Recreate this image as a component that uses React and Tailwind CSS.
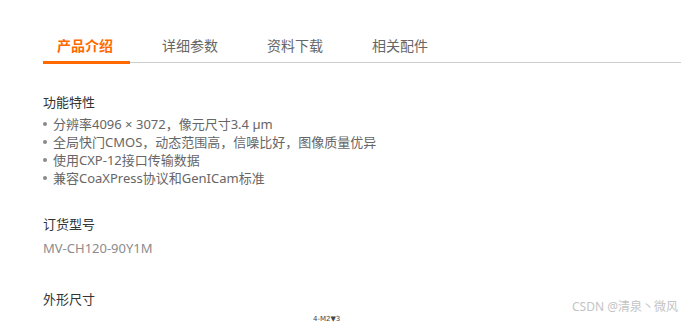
import React from 'react';

const tabs = ['产品介绍', '详细参数', '资料下载', '相关配件'];

const features = [
  '分辨率4096 × 3072，像元尺寸3.4 µm',
  '全局快门CMOS，动态范围高，信噪比好，图像质量优异',
  '使用CXP-12接口传输数据',
  '兼容CoaXPress协议和GenICam标准',
];

const App = () => {
  return (
    <div
      className="relative w-[681px] h-[324px] overflow-hidden bg-white"
      style={{ fontFamily: '"Noto Sans", "Noto Sans CJK SC", sans-serif' }}
    >
      {/* tabs */}
      <div className="ml-[43px] mt-[30px] flex items-start gap-[18px] border-b border-[#cccccc] h-[33px]">
        {tabs.map((t, i) => (
          <div
            key={t}
            className={
              i === 0
                ? 'w-[87px] h-[34px] pl-[14px] pt-[6px] text-[14px] leading-[20px] font-bold text-[#ff6a00] border-b-[3px] border-[#ff6a00]'
                : 'w-[87px] h-[32px] pl-[14px] pt-[6px] text-[14px] leading-[20px] text-[#666666]'
            }
          >
            {t}
          </div>
        ))}
      </div>

      <div className="pl-[43px]">
        <div className="mt-[29px] text-[13px] leading-[20px] text-[#333333]">功能特性</div>
        <ul className="mt-[3px]">
          {features.map((f) => (
            <li key={f} className="flex items-center gap-[6px] text-[13px] leading-[18px] text-[#666666]">
              <span className="w-[4px] h-[4px] rounded-full bg-[#8a8a8a] shrink-0" />
              {f}
            </li>
          ))}
        </ul>

        <div className="mt-[27px] text-[13px] leading-[20px] text-[#333333]">订货型号</div>
        <div className="mt-[4px] text-[13px] leading-[20px] text-[#8c8c8c]">MV-CH120-90Y1M</div>

        <div className="mt-[31px] text-[13px] leading-[20px] text-[#333333]">外形尺寸</div>
        <div
          className="mt-[6px] ml-[270px] text-[7px] leading-[8px] text-[#444444]"
          style={{ fontFamily: '"DejaVu Sans", sans-serif' }}
        >
          4-M2▼3
        </div>
      </div>

      <div className="absolute left-[572px] top-[298px] text-[12px] leading-[18px] text-[#c4c4c4] whitespace-nowrap">
        CSDN @清泉丶微风
      </div>
    </div>
  );
};

export default App;
